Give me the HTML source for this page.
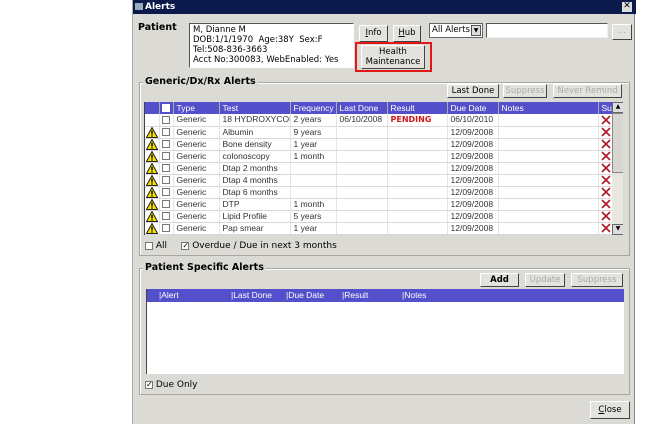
<!DOCTYPE html><html><head><style>
*{box-sizing:border-box;margin:0;padding:0}
body{width:672px;height:424px;background:#fff;position:relative;overflow:hidden;font-family:"DejaVu Sans","Liberation Sans",sans-serif;font-size:9px;color:#000}
.a{position:absolute}
#win{left:132px;top:0;width:503px;height:424px;background:#dcdad4;border-left:1px solid #aaa;border-right:1px solid #888}
.tb{left:0;top:0;width:503px;height:14px;background:#0a1a4a;color:#fff;font-weight:bold;font-size:9px;padding:2px 0 0 12px}
.btn{position:absolute;background:#e4e2dc;border:1px solid;border-color:#fff #444 #444 #fff;text-align:center;font-size:8.5px;line-height:12px}
.dis{color:#aaa}
.grp{position:absolute;border:1px solid #a8a6a0;box-shadow:inset 1px 1px 0 #fff}
.gl{position:absolute;background:#dcdad4;font-weight:bold;font-size:9.5px;padding:0 2px}
table{border-collapse:collapse;font-family:"Liberation Sans",sans-serif;font-size:8.5px}
tr{height:12px}
td{height:12px;line-height:11px;border-bottom:1px solid #d8d8d8;border-right:1px solid #e4e4e4;padding:0 0 0 3px;white-space:nowrap;overflow:hidden;color:#333}
td svg{display:block}
th{height:12px;line-height:11px;background:#5450cc;color:#fff;font-weight:normal;text-align:left;padding-left:3px;border-right:1px solid #aaa}
.cb{display:inline-block;width:8px;height:8px;border:1px solid #777;background:#fff;vertical-align:middle}
.w{padding:0 0 0 1px}
.x{padding:0 0 0 2px}
</style></head><body>
<svg width="0" height="0" style="position:absolute"><defs>
<symbol id="wt" viewBox="0 0 12 11"><path d="M6 0.5L11.5 10.5H0.5Z" fill="#f4e000" stroke="#222" stroke-width="1"/><rect x="5.3" y="3.5" width="1.4" height="4" fill="#000"/><rect x="5.3" y="8.3" width="1.4" height="1.3" fill="#000"/></symbol>
<symbol id="xx" viewBox="0 0 10 10"><path d="M1 1L9 9M9 1L1 9" stroke="#b01828" stroke-width="1.6"/></symbol>
</defs></svg>
<div id="win" class="a">
<div class="a tb"><span style="position:absolute;left:2px;top:3px;width:8px;height:7px;background:#9ab"></span>Alerts<span style="position:absolute;right:4px;top:2px;width:10px;height:10px;background:#ddd;color:#000;font-size:9px;line-height:9px;text-align:center">✕</span></div>
<div class="a" style="left:5px;top:22px;font-weight:bold;font-size:9.5px">Patient</div>
<div class="a" style="left:56px;top:23px;width:165px;height:45px;background:#fff;border:1px solid;border-color:#555 #fff #fff #555;font-size:8.5px;line-height:10px;padding:1px 3px">M, Dianne M<br>DOB:1/1/1970 &nbsp;Age:38Y &nbsp;Sex:F<br>Tel:508-836-3663<br>Acct No:300083, WebEnabled: Yes</div>
<div class="btn" style="left:226px;top:25px;width:29px;height:17px;line-height:15px"><u>I</u>nfo</div>
<div class="btn" style="left:260px;top:25px;width:28px;height:17px;line-height:15px"><u>H</u>ub</div>
<div class="a" style="left:222px;top:42px;width:77px;height:30px;border:2px solid #e01818"></div>
<div class="btn" style="left:228px;top:45px;width:64px;height:24px;line-height:10px;padding-top:1px">Health<br>Maintenance</div>
<div class="a" style="left:296px;top:23px;width:54px;height:15px;background:#fff;border:1px solid #666;font-size:8.5px;padding:1px 2px">All Alerts<span style="position:absolute;right:1px;top:1px;width:10px;height:11px;background:#ddd;border:1px solid #555;font-size:6px;text-align:center;line-height:10px">▼</span></div>
<div class="a" style="left:353px;top:23px;width:122px;height:15px;background:#fff;border:1px solid;border-color:#555 #eee #eee #555"></div>
<div class="btn dis" style="left:479px;top:24px;width:20px;height:16px">...</div>

<div class="grp" style="left:6px;top:82px;width:491px;height:174px"></div>
<div class="gl" style="left:10px;top:76px">Generic/Dx/Rx Alerts</div>
<div class="btn" style="left:314px;top:84px;width:52px;height:14px">Last Done</div>
<div class="btn dis" style="left:370px;top:84px;width:44px;height:14px">Suppress</div>
<div class="btn dis" style="left:420px;top:84px;width:69px;height:14px">Never Remind</div>
<div class="a" style="left:11px;top:102px;width:479px;height:133px;background:#fff;border-left:1px solid #444;overflow:hidden">
<table style="width:467px;table-layout:fixed">
<colgroup><col style="width:14px"><col style="width:14px"><col style="width:46px"><col style="width:71px"><col style="width:46px"><col style="width:51px"><col style="width:60px"><col style="width:51px"><col style="width:100px"><col style="width:14px"></colgroup>
<tr><th></th><th style="padding-left:2px"><span class="cb" style="border-color:#fff"></span></th><th>Type</th><th>Test</th><th>Frequency</th><th>Last Done</th><th>Result</th><th>Due Date</th><th>Notes</th><th>Su</th></tr>
<tr><td></td><td style="padding-left:2px"><span class="cb"></span></td><td>Generic</td><td>18 HYDROXYCOF</td><td>2 years</td><td>06/10/2008</td><td style="color:#d01818;font-weight:bold;font-family:'DejaVu Sans';font-size:8px">PENDING</td><td>06/10/2010</td><td></td><td class="x"><svg width="10" height="10"><use href="#xx"/></svg></td></tr>
<tr><td class="w"><svg width="12" height="11"><use href="#wt"/></svg></td><td style="padding-left:2px"><span class="cb"></span></td><td>Generic</td><td>Albumin</td><td>9 years</td><td></td><td></td><td>12/09/2008</td><td></td><td class="x"><svg width="10" height="10"><use href="#xx"/></svg></td></tr>
<tr><td class="w"><svg width="12" height="11"><use href="#wt"/></svg></td><td style="padding-left:2px"><span class="cb"></span></td><td>Generic</td><td>Bone density</td><td>1 year</td><td></td><td></td><td>12/09/2008</td><td></td><td class="x"><svg width="10" height="10"><use href="#xx"/></svg></td></tr>
<tr><td class="w"><svg width="12" height="11"><use href="#wt"/></svg></td><td style="padding-left:2px"><span class="cb"></span></td><td>Generic</td><td>colonoscopy</td><td>1 month</td><td></td><td></td><td>12/09/2008</td><td></td><td class="x"><svg width="10" height="10"><use href="#xx"/></svg></td></tr>
<tr><td class="w"><svg width="12" height="11"><use href="#wt"/></svg></td><td style="padding-left:2px"><span class="cb"></span></td><td>Generic</td><td>Dtap 2 months</td><td></td><td></td><td></td><td>12/09/2008</td><td></td><td class="x"><svg width="10" height="10"><use href="#xx"/></svg></td></tr>
<tr><td class="w"><svg width="12" height="11"><use href="#wt"/></svg></td><td style="padding-left:2px"><span class="cb"></span></td><td>Generic</td><td>Dtap 4 months</td><td></td><td></td><td></td><td>12/09/2008</td><td></td><td class="x"><svg width="10" height="10"><use href="#xx"/></svg></td></tr>
<tr><td class="w"><svg width="12" height="11"><use href="#wt"/></svg></td><td style="padding-left:2px"><span class="cb"></span></td><td>Generic</td><td>Dtap 6 months</td><td></td><td></td><td></td><td>12/09/2008</td><td></td><td class="x"><svg width="10" height="10"><use href="#xx"/></svg></td></tr>
<tr><td class="w"><svg width="12" height="11"><use href="#wt"/></svg></td><td style="padding-left:2px"><span class="cb"></span></td><td>Generic</td><td>DTP</td><td>1 month</td><td></td><td></td><td>12/09/2008</td><td></td><td class="x"><svg width="10" height="10"><use href="#xx"/></svg></td></tr>
<tr><td class="w"><svg width="12" height="11"><use href="#wt"/></svg></td><td style="padding-left:2px"><span class="cb"></span></td><td>Generic</td><td>Lipid Profile</td><td>5 years</td><td></td><td></td><td>12/09/2008</td><td></td><td class="x"><svg width="10" height="10"><use href="#xx"/></svg></td></tr>
<tr><td class="w"><svg width="12" height="11"><use href="#wt"/></svg></td><td style="padding-left:2px"><span class="cb"></span></td><td>Generic</td><td>Pap smear</td><td>1 year</td><td></td><td></td><td>12/09/2008</td><td></td><td class="x"><svg width="10" height="10"><use href="#xx"/></svg></td></tr>
</table>
<div class="a" style="left:467px;top:0;width:12px;height:133px;background:#e8e6e0"><div style="height:11px;background:#ddd;border:1px solid #666;font-size:6px;text-align:center">▲</div><div style="height:60px;background:#d8d6d0;border:1px solid #888"></div><div style="position:absolute;bottom:0;width:12px;height:11px;border:1px solid #666;font-size:6px;text-align:center;background:#ddd">▼</div></div>
</div>
<div class="a" style="left:12px;top:241px;font-size:9px"><span class="cb" style="background:#fff"></span> All &nbsp;&nbsp;&nbsp; <span class="cb" style="font-size:8px;line-height:6px">✓</span> Overdue / Due in next 3 months</div>

<div class="grp" style="left:6px;top:268px;width:491px;height:127px"></div>
<div class="gl" style="left:10px;top:262px">Patient Specific Alerts</div>
<div class="btn" style="left:347px;top:273px;width:39px;height:14px;font-weight:bold">Add</div>
<div class="btn dis" style="left:392px;top:273px;width:40px;height:14px">Update</div>
<div class="btn dis" style="left:438px;top:273px;width:52px;height:14px">Suppress</div>
<div class="a" style="left:13px;top:289px;width:478px;height:85px;background:#fff;border-left:1px solid #444">
<div style="height:13px;background:#5450cc;color:#fff;font-family:'Liberation Sans';font-size:8.5px;position:relative">
<span class="a" style="left:12px;top:1px">|Alert</span><span class="a" style="left:84px;top:1px">|Last Done</span><span class="a" style="left:139px;top:1px">|Due Date</span><span class="a" style="left:195px;top:1px">|Result</span><span class="a" style="left:255px;top:1px">|Notes</span></div></div>
<div class="a" style="left:12px;top:380px;font-size:9px"><span class="cb" style="font-size:8px;line-height:6px">✓</span> Due Only</div>
<div class="btn" style="left:457px;top:401px;width:40px;height:18px;line-height:16px"><u>C</u>lose</div>
</div>
</body></html>
